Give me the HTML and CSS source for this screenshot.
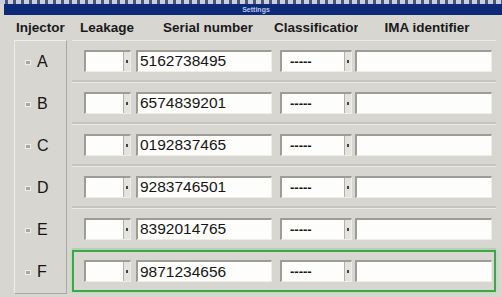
FILE: index.html
```html
<!DOCTYPE html>
<html lang="en">
<head>
  <meta charset="UTF-8" />
  <title>Settings</title>
  <link rel="stylesheet" href="styles.css">
</head>
<body>

  <!-- window title -->
  <div class="topstrip"></div>
  <div class="titlebar">Settings</div>

  <!-- column headings -->
  <div class="header">
    <div class="h h-inj">Injector</div>
    <div class="h h-leak">Leakage</div>
    <div class="h h-serial">Serial number</div>
    <div class="h h-class">Classification</div>
    <div class="h h-ima">IMA identifier</div>
  </div>

  <div class="table">
    <div class="inj-panel">
      <div class="inj"><span class="check"></span>A</div>
      <div class="inj"><span class="check"></span>B</div>
      <div class="inj"><span class="check"></span>C</div>
      <div class="inj"><span class="check"></span>D</div>
      <div class="inj"><span class="check"></span>E</div>
      <div class="inj"><span class="check"></span>F</div>
    </div>

    <div class="rows">
      <div class="row">
        <div class="box leak"><span class="arrow"></span></div>
        <div class="box serial">5162738495</div>
        <div class="box select">-----<span class="arrow"></span></div>
        <div class="box ima"></div>
      </div>
      <div class="row">
        <div class="box leak"><span class="arrow"></span></div>
        <div class="box serial">6574839201</div>
        <div class="box select">-----<span class="arrow"></span></div>
        <div class="box ima"></div>
      </div>
      <div class="row">
        <div class="box leak"><span class="arrow"></span></div>
        <div class="box serial">0192837465</div>
        <div class="box select">-----<span class="arrow"></span></div>
        <div class="box ima"></div>
      </div>
      <div class="row">
        <div class="box leak"><span class="arrow"></span></div>
        <div class="box serial">9283746501</div>
        <div class="box select">-----<span class="arrow"></span></div>
        <div class="box ima"></div>
      </div>
      <div class="row">
        <div class="box leak"><span class="arrow"></span></div>
        <div class="box serial">8392014765</div>
        <div class="box select">-----<span class="arrow"></span></div>
        <div class="box ima"></div>
      </div>
      <div class="row active">
        <div class="box leak"><span class="arrow"></span></div>
        <div class="box serial">9871234656</div>
        <div class="box select">-----<span class="arrow"></span></div>
        <div class="box ima"></div>
      </div>
    </div>
  </div>

</body>
</html>
```

FILE: styles.css
```css
* { margin: 0; padding: 0; box-sizing: border-box; font-family: "Liberation Sans", Arial, sans-serif; }

body {
  width: 502px;
  height: 297px;
  overflow: hidden;
  background: #d7d6d1;
  color: #151515;
}

.topstrip {
  height: 4px;
  background: repeating-linear-gradient(to right, #c9cfdc 0 5px, #4a5578 5px 8px);
}

.titlebar {
  height: 11px;
  margin-left: 4px;
  background: #0c2a78;
  color: #b9c8f0;
  font-size: 7px;
  font-weight: bold;
  line-height: 11px;
  text-align: center;
  padding-left: 6px;
}

.header {
  display: flex;
  height: 25px;
  align-items: center;
  font-size: 13.5px;
  font-weight: bold;
  color: #1a1a1a;
}

.h { white-space: nowrap; overflow: hidden; }
.h-inj { margin-left: 16px; width: 56px; }
.h-leak { width: 70px; text-align: center; }
.h-serial { width: 132px; text-align: center; }
.h-class { width: 84px; }
.h-ima { width: 138px; text-align: center; }

.table {
  display: flex;
  gap: 5px;
  padding-left: 14px;
}

.inj-panel {
  width: 53px;
  border-top: 1px solid #efeeea;
  border-left: 1px solid #efeeea;
  border-right: 1px solid #a9a8a3;
  border-bottom: 1px solid #a9a8a3;
}

.inj {
  height: 42px;
  display: flex;
  align-items: center;
  padding-left: 10px;
  gap: 6px;
  font-size: 16px;
}

.check {
  width: 6px;
  height: 5px;
  background: #a8a7a2;
  border: 1px solid #eeede8;
}

.rows { width: 424px; }

.row {
  height: 42px;
  display: flex;
  align-items: center;
  padding-left: 12px;
  border-top: 1px solid #ebeae5;
  border-bottom: 2px solid #c6c4be;
}

.row.active {
  border: 2px solid #3aa845;
  box-shadow: 0 0 3px #9fe49f;
  padding-left: 10px;
}

.box {
  height: 22px;
  background: #fdfdfb;
  border-top: 2px solid #9d9c97;
  border-left: 2px solid #9d9c97;
  border-right: 1px solid #eeede8;
  border-bottom: 1px solid #eeede8;
  display: flex;
  align-items: center;
  position: relative;
}

.leak { width: 47px; margin-right: 5px; }
.serial { width: 136px; margin-right: 8px; padding-left: 2px; font-size: 15.5px; }
.select { width: 72px; margin-right: 3px; padding-left: 8px; font-size: 13px; font-weight: bold; }
.ima { width: 137px; }

.arrow {
  position: absolute;
  right: 0;
  top: 0;
  bottom: 0;
  width: 7px;
  background: #e4e3de;
  border-left: 1px solid #b2b1ac;
}

.arrow::after {
  content: "";
  position: absolute;
  left: 2px;
  top: 8px;
  width: 2px;
  height: 3px;
  background: #444;
}
```
